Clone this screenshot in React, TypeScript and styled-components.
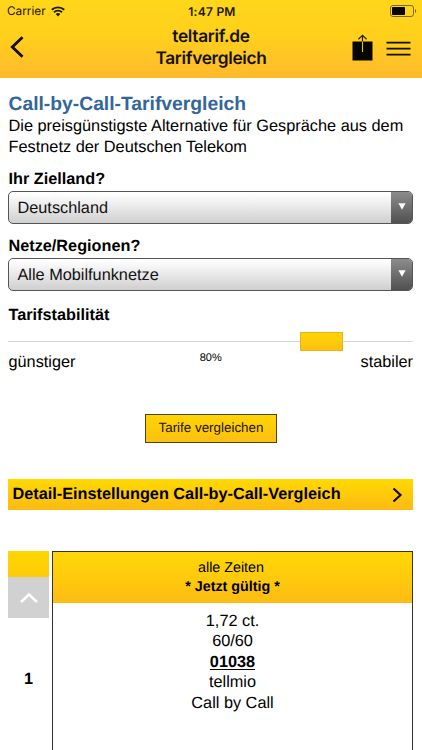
import React from "react";
import styled, { createGlobalStyle } from "styled-components";

const Global = createGlobalStyle`
  * { box-sizing: border-box; }
  html, body { margin: 0; padding: 0; background: #fff; overflow: hidden; }
  body { font-family: "Liberation Sans", Arial, sans-serif; color: #000; text-rendering: geometricPrecision; }
`;

const Screen = styled.main`
  width: 422px;
  height: 750px;
  overflow: hidden;
  background: #fff;
`;

const Header = styled.header`
  height: 78px;
  background: linear-gradient(#ffd61a 0%, #ffd01c 45%, #ffba2c 100%);
  font-family: Inter, sans-serif;
`;

const StatusBar = styled.div`
  height: 22px;
  padding: 0 5px 0 7px;
  display: grid;
  grid-template-columns: 1fr auto 1fr;
  align-items: center;
  font-size: 11.8px;
  color: #1d1803;
`;

const Carrier = styled.div`
  display: flex;
  align-items: center;
  gap: 5px;
`;

const Clock = styled.div`
  font-weight: 600;
  font-size: 12px;
  letter-spacing: 0.25px;
`;

const BatterySlot = styled.div`
  display: flex;
  justify-content: flex-end;
`;

const NavBar = styled.div`
  height: 56px;
  display: grid;
  grid-template-columns: 110px 1fr 110px;
`;

const BackButton = styled.div`
  padding: 14px 0 0 10px;
`;

const NavTitle = styled.h1`
  margin: 0;
  padding-top: 4px;
  text-align: center;
  font-size: 17.3px;
  line-height: 22px;
  font-weight: 600;
  letter-spacing: -0.32px;
  color: #151100;
`;

const NavActions = styled.div`
  display: flex;
  justify-content: flex-end;
  align-items: flex-start;
  gap: 13px;
  padding: 12px 11px 0 0;
`;

const Content = styled.div`
  padding: 15px 9px 0 8px;
`;

const PageTitle = styled.h2`
  margin: 0;
  padding-left: 0.5px;
  font-size: 19.3px;
  line-height: 23px;
  color: #336699;
`;

const Intro = styled.p`
  margin: 0;
  padding-left: 0.5px;
  font-size: 16.33px;
  line-height: 20.5px;
  white-space: nowrap;
`;

const Label = styled.div<{ $top: number }>`
  margin-top: ${(p) => p.$top}px;
  padding-left: 0.5px;
  font-weight: bold;
  font-size: 16.25px;
  line-height: 20px;
`;

const Select = styled.div`
  margin-top: 2px;
  height: 33px;
  display: flex;
  border: 1px solid #555;
  border-radius: 5px;
  overflow: hidden;
  background: linear-gradient(#fff 5%, #cfcfcf 100%);
`;

const SelectValue = styled.div`
  flex: 1;
  padding-left: 8.5px;
  font-size: 16.3px;
  line-height: 32px;
  color: #111;
`;

const SelectArrow = styled.div`
  width: 21px;
  display: flex;
  justify-content: center;
  padding-top: 11px;
  background: linear-gradient(#8c8c8c, #505050);
`;

const Track = styled.div`
  height: 19px;
  margin: 7px 0 0 0;
  padding-left: 292px;
  background: linear-gradient(#d8d8d8, #d8d8d8) 0 9px / 100% 1px no-repeat;
`;

const Thumb = styled.div`
  width: 43px;
  height: 19px;
  border: 1px solid #e5b320;
  background: linear-gradient(#ffd503, #fdc010);
`;

const ScaleRow = styled.div`
  display: grid;
  grid-template-columns: 1fr auto 1fr;
  height: 24px;
  padding-left: 0.5px;
  font-size: 16.3px;
  line-height: 22px;
`;

const ScaleEnd = styled.span`
  text-align: right;
`;

const Percent = styled.span`
  font-size: 11px;
  line-height: 14px;
`;

const Submit = styled.div`
  width: 132px;
  height: 29px;
  margin: 39px auto 0 137px;
  border: 1px solid #51450e;
  background: linear-gradient(#ffd503, #fdbf11);
  text-align: center;
  font-size: 13.4px;
  line-height: 26px;
  color: #1c1700;
`;

const DetailBar = styled.div`
  height: 31px;
  margin-top: 36px;
  padding: 0 10px 0 4.5px;
  display: flex;
  align-items: center;
  justify-content: space-between;
  background: linear-gradient(#ffd900, #fdba14);
  font-weight: bold;
  font-size: 16.27px;
`;

const Results = styled.div`
  margin-top: 41px;
  display: grid;
  grid-template-columns: 41px 361px;
  column-gap: 3px;
`;

const RankColumn = styled.div`
  display: flex;
  flex-direction: column;
`;

const RankHead = styled.div`
  height: 26px;
  background: linear-gradient(#ffd600, #fecb09);
`;

const ScrollTop = styled.div`
  height: 41px;
  background: #d1d1d1;
  display: flex;
  justify-content: center;
  padding-top: 15px;
`;

const Rank = styled.div`
  padding-top: 51px;
  text-align: center;
  font-weight: bold;
  font-size: 16.3px;
  line-height: 20px;
`;

const Offer = styled.div`
  height: 240px;
  border: 1px solid #35342c;
  text-align: center;
`;

const OfferHead = styled.div`
  height: 51px;
  padding-top: 7px;
  background: linear-gradient(#ffd806, #fdbc14);
  font-size: 14.3px;
  line-height: 19px;
`;

const Period = styled.div`
  padding-right: 3px;
`;

const OfferBody = styled.div`
  padding-top: 8px;
  font-size: 16.3px;
  line-height: 20.4px;
`;

const Dial = styled.div`
  font-weight: bold;
  text-decoration: underline;
  text-decoration-thickness: 1px;
  text-underline-offset: 2px;
`;

const Wifi = () => (
  <svg width="14" height="11" viewBox="0 0 14 11" fill="none" stroke="#1d1803" strokeWidth="1.9">
    <path d="M.8 3.8C4.2.5 9.8.5 13.2 3.8" />
    <path d="M3 6.2c2.2-2.1 5.8-2.1 8 0" />
    <path d="M4.7 8C6 6.8 8 6.8 9.3 8L7 10.5Z" fill="#1d1803" stroke="none" />
  </svg>
);

const Battery = () => (
  <svg width="27" height="12" viewBox="0 0 27 12">
    <rect x=".5" y=".5" width="23" height="11" rx="2.5" fill="none" stroke="#7c6915" />
    <rect x="2" y="2" width="13" height="8" rx=".8" fill="#080600" />
    <path d="M25 4v4c1.6-.5 1.6-3.5 0-4Z" fill="#7c6915" />
  </svg>
);

const Arrow = () => (
  <SelectArrow>
    <svg width="8" height="7" viewBox="0 0 8 7"><path d="M.4.3h7.2L4 6.7Z" fill="#fff" /></svg>
  </SelectArrow>
);

const Dropdown = ({ value }: { value: string }) => (
  <Select>
    <SelectValue>{value}</SelectValue>
    <Arrow />
  </Select>
);

export default function App() {
  return (
    <Screen>
      <Global />
      <Header>
        <StatusBar>
          <Carrier>Carrier <Wifi /></Carrier>
          <Clock>1:47 PM</Clock>
          <BatterySlot><Battery /></BatterySlot>
        </StatusBar>
        <NavBar>
          <BackButton>
            <svg width="15" height="22" viewBox="0 0 15 22" fill="none" stroke="#110d00" strokeWidth="2.8">
              <path d="M12.5 1.3 2.3 11l10.2 9.7" />
            </svg>
          </BackButton>
          <NavTitle>teltarif.de<br />Tarifvergleich</NavTitle>
          <NavActions>
            <svg width="21" height="27" viewBox="0 0 21 27" fill="none">
              <path d="M.5 7.5h20V26.5H.5Z" fill="#080600" />
              <path d="M10.5 1v7M6.4 5.3l4.1-4 4.1 4" stroke="#2b2203" strokeWidth="1.2" />
              <path d="M10.5 7.5V18" stroke="#e8c022" strokeWidth="1.1" />
            </svg>
            <svg width="25" height="27" viewBox="0 0 25 27" stroke="#110d00" strokeWidth="1.8">
              <path d="M.5 8.6h24M.5 14.6h24M.5 20.6h24" />
            </svg>
          </NavActions>
        </NavBar>
      </Header>
      <Content>
        <PageTitle>Call-by-Call-Tarifvergleich</PageTitle>
        <Intro>
          Die preisgünstigste Alternative für Gespräche aus dem<br />
          Festnetz der Deutschen Telekom
        </Intro>
        <Label $top={12}>Ihr Zielland?</Label>
        <Dropdown value="Deutschland" />
        <Label $top={12}>Netze/Regionen?</Label>
        <Dropdown value="Alle Mobilfunknetze" />
        <Label $top={14}>Tarifstabilität</Label>
        <Track><Thumb /></Track>
        <ScaleRow>
          <span>günstiger</span>
          <Percent>80%</Percent>
          <ScaleEnd>stabiler</ScaleEnd>
        </ScaleRow>
        <Submit>Tarife vergleichen</Submit>
        <DetailBar>
          Detail-Einstellungen Call-by-Call-Vergleich
          <svg width="11" height="16" viewBox="0 0 11 16" fill="none" stroke="#110d00" strokeWidth="2.2">
            <path d="m1.5 1.5 7 6.5-7 6.5" />
          </svg>
        </DetailBar>
        <Results>
          <RankColumn>
            <RankHead />
            <ScrollTop>
              <svg width="18" height="12" viewBox="0 0 18 12" fill="none" stroke="#fff" strokeWidth="2.4">
                <path d="m1 10 8-7.5 8 7.5" />
              </svg>
            </ScrollTop>
            <Rank>1</Rank>
          </RankColumn>
          <Offer>
            <OfferHead>
              <Period>alle Zeiten</Period>
              <b>* Jetzt gültig *</b>
            </OfferHead>
            <OfferBody>
              <div>1,72 ct.</div>
              <div>60/60</div>
              <Dial>01038</Dial>
              <div>tellmio</div>
              <div>Call by Call</div>
            </OfferBody>
          </Offer>
        </Results>
      </Content>
    </Screen>
  );
}
